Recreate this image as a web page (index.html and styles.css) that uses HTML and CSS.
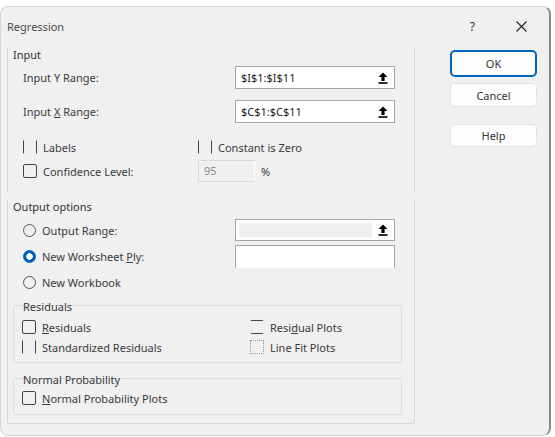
FILE: index.html
```html
<!DOCTYPE html>
<html lang="en">
<head>
    <meta charset="UTF-8">
    <title>Regression</title>
    <link rel="stylesheet" href="styles.css">
</head>
<body>
    <div class="dialog">
        <div class="titlebar">
            <span class="title">Regression</span>
            <span class="title-help">?</span>
            <span class="title-close">
                <svg width="11" height="11" viewBox="0 0 11 11"><path d="M0.5 0.5 L10.5 10.5 M10.5 0.5 L0.5 10.5" stroke="#222" stroke-width="1.1" fill="none"/></svg>
            </span>
        </div>

        <div class="content">
            <div class="groups">
                <div class="group group-input">
                    <div class="group-label">Input</div>

                    <div class="row range-row first">
                        <span class="label">Input Y Range:</span>
                        <div class="range-box">
                            <span class="range-text">$I$1:$I$11</span>
                            <span class="ref-btn"><svg width="10" height="12" viewBox="0 0 10 12"><path d="M5 0.5 L9.5 5 H6.6 V9 H3.4 V5 H0.5 Z" fill="#000"/><rect x="0.5" y="10.2" width="9" height="1.6" fill="#000"/></svg></span>
                        </div>
                    </div>

                    <div class="row range-row second">
                        <span class="label">Input <u>X</u> Range:</span>
                        <div class="range-box">
                            <span class="range-text">$C$1:$C$11</span>
                            <span class="ref-btn"><svg width="10" height="12" viewBox="0 0 10 12"><path d="M5 0.5 L9.5 5 H6.6 V9 H3.4 V5 H0.5 Z" fill="#000"/><rect x="0.5" y="10.2" width="9" height="1.6" fill="#000"/></svg></span>
                        </div>
                    </div>

                    <div class="row check-row labels-row">
                        <label class="opt opt-wide"><span class="cb cb-sides"></span><span>Labels</span></label>
                        <label class="opt"><span class="cb cb-sides"></span><span>Constant is Zero</span></label>
                    </div>

                    <div class="row conf-row">
                        <label class="opt opt-wide"><span class="cb"></span><span>Confidence Level:</span></label>
                        <span class="conf-box">95</span>
                        <span class="pct">%</span>
                    </div>
                </div>

                <div class="group group-output">
                    <div class="group-label">Output options</div>

                    <div class="row range-row out-first">
                        <label class="opt label"><span class="rb"></span><span>Output Range:</span></label>
                        <div class="range-box disabled">
                            <span class="range-text"></span>
                            <span class="ref-btn"><svg width="10" height="12" viewBox="0 0 10 12"><path d="M5 0.5 L9.5 5 H6.6 V9 H3.4 V5 H0.5 Z" fill="#000"/><rect x="0.5" y="10.2" width="9" height="1.6" fill="#000"/></svg></span>
                        </div>
                    </div>

                    <div class="row range-row out-second">
                        <label class="opt label"><span class="rb rb-on"></span><span>New Worksheet <u>P</u>ly:</span></label>
                        <div class="range-box open-bottom"></div>
                    </div>

                    <div class="row check-row out-third">
                        <label class="opt"><span class="rb"></span><span>New Workbook</span></label>
                    </div>

                    <div class="subgroup residuals">
                        <div class="sub-label">Residuals</div>
                        <div class="sub-grid">
                            <label class="opt"><span class="cb"></span><span><u>R</u>esiduals</span></label>
                            <label class="opt"><span class="cb cb-tb"></span><span>Resi<u>d</u>ual Plots</span></label>
                            <label class="opt"><span class="cb cb-sides"></span><span>Standardized Residuals</span></label>
                            <label class="opt"><span class="cb cb-dots"></span><span>Line Fit Plots</span></label>
                        </div>
                    </div>

                    <div class="subgroup normal">
                        <div class="sub-label">Normal Probability</div>
                        <div class="sub-single">
                            <label class="opt"><span class="cb"></span><span><u>N</u>ormal Probability Plots</span></label>
                        </div>
                    </div>
                </div>
            </div>

            <div class="buttons">
                <button class="btn btn-ok">OK</button>
                <button class="btn btn-cancel">Cancel</button>
                <button class="btn btn-help">Help</button>
            </div>
        </div>
    </div>
</body>
</html>
```

FILE: styles.css
```css
body { margin: 0; background: #ffffff; font-family: "Noto Sans", "Open Sans", sans-serif; font-size: 11px; color: #3a3a3a; }
u { text-decoration: underline; text-underline-offset: 1px; }

.dialog { margin-top: 6px; width: 551px; height: 430px; box-sizing: border-box; background: #f0f0f0; border: 1px solid #d4d4d4; border-right: 2px solid #8a8a8a; border-radius: 8px; overflow: hidden; }

.titlebar { height: 39px; display: flex; align-items: center; padding: 0 22px 0 6px; }
.title { font-size: 11px; color: #4a4a4a; }
.title-help { margin-left: auto; margin-right: -2px; font-size: 12px; color: #333; }
.title-close { margin-left: 43px; display: flex; }

.content { display: flex; padding-left: 6px; }
.groups { width: 408px; }

.group { box-sizing: border-box; border-left: 1px solid #d8d8d8; border-right: 1px solid #d8d8d8; padding-left: 5px; }
.group-input { margin-top: 2px; height: 144px; }
.group-output { margin-top: 8px; height: 224px; border-bottom: 1px solid #d8d8d8; border-radius: 0 0 3px 3px; }
.group-label { height: 14px; line-height: 14px; color: #333; }

.row { display: flex; align-items: center; padding-left: 10px; }
.label { width: 212px; flex-shrink: 0; }
.range-row { height: 23px; }
.range-row.first { margin-top: 4px; }
.range-row.second { margin-top: 11px; }

.range-box { width: 160px; height: 23px; box-sizing: border-box; background: #fff; border: 1px solid #a6a6a6; display: flex; align-items: center; }
.range-text { flex: 1; padding-left: 5px; color: #222; }
.ref-btn { width: 22px; display: flex; justify-content: center; }
.range-box.disabled .range-text { align-self: stretch; margin: 3px 0 3px 3px; background: #efefef; }
.range-box.open-bottom { border-bottom-color: transparent; }

.check-row { height: 16px; }
.labels-row { margin-top: 16px; }
.conf-row { margin-top: 5px; height: 22px; }

.opt { display: flex; align-items: center; white-space: nowrap; }
.opt-wide { width: 175px; flex-shrink: 0; }

.cb { width: 12px; height: 12px; border: 1px solid #444; border-radius: 2px; margin-right: 6px; flex-shrink: 0; }
.cb-sides { border-top-color: transparent; border-bottom-color: transparent; border-radius: 0; }
.cb-tb { border-left-color: transparent; border-right-color: transparent; }
.cb-dots { border: 1px dotted #999; border-radius: 0; }

.rb { width: 11px; height: 11px; border: 1px solid #555; border-radius: 50%; margin-right: 6px; flex-shrink: 0; box-sizing: content-box; }
.rb-on { border-color: #005fb8; background: radial-gradient(circle, #fff 0 3px, #005fb8 3.5px); }

.conf-box { width: 57px; height: 22px; box-sizing: border-box; background: #f0f0f0; border: 1px solid #d8d8d8; border-right-color: #fff; line-height: 20px; padding-left: 5px; color: #888; }
.pct { margin-left: 6px; }

.out-first { margin-top: 5px; height: 22px; }
.out-first .range-box { height: 22px; }
.out-second { margin-top: 4px; }
.out-third { margin-top: 6px; }

.subgroup { box-sizing: border-box; width: 389px; margin-left: 0; border: 1px solid #dcdcdc; border-radius: 2px; padding-left: 8px; }
.sub-label { height: 14px; line-height: 14px; margin-top: -6px; padding-left: 1px; }
.residuals { margin-top: 15px; height: 58px; }
.sub-grid { display: grid; grid-template-columns: 228px auto; row-gap: 4px; margin-top: 5px; }
.sub-grid .opt { height: 16px; }
.normal { margin-top: 15px; height: 37px; }
.sub-single { margin-top: 3px; }
.sub-single .opt { height: 16px; }

.buttons { margin-left: 35px; width: 87px; display: flex; flex-direction: column; }
.btn { font-family: inherit; font-size: 11px; color: #333; background: #fdfdfd; border: 1px solid #e2e2e2; border-radius: 4px; padding: 0; }
.btn-ok { margin-top: 4px; height: 27px; border: 2px solid #0067c0; border-radius: 5px; }
.btn-cancel { margin-top: 6px; height: 24px; }
.btn-help { margin-top: 17px; height: 23px; }
```
